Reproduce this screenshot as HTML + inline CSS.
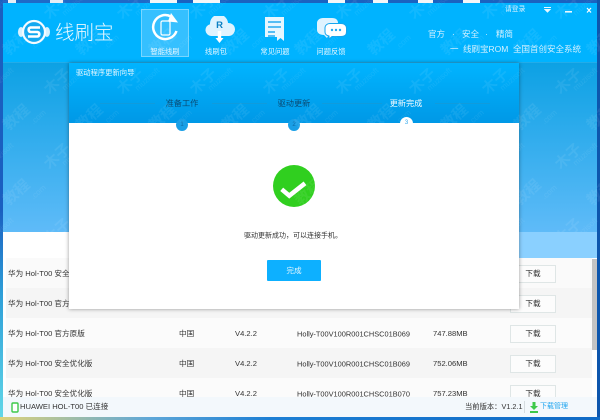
<!DOCTYPE html>
<html><head><meta charset="utf-8"><style>
*{margin:0;padding:0;box-sizing:border-box}
html,body{width:600px;height:420px;overflow:hidden;background:#1565c0}
body{font-family:"Liberation Sans","Noto Sans CJK SC",sans-serif;color:#333}
#w{position:absolute;left:0;top:0;width:600px;height:420px;filter:blur(.3px)}
.a{position:absolute;white-space:nowrap;line-height:1}
.t{font-size:7.6px;color:#333;transform:translateY(-50%)}
.h{font-size:7.4px}
.c{transform:translate(-50%,-50%)}
.btn{position:absolute;left:510px;width:46px;height:18px;border:1px solid #dfe6e6;background:#fcfcfc;font-size:7.6px;line-height:16px;text-align:center;color:#333}
.nav{position:absolute;font-size:7.3px;color:#e4f6ff;line-height:1;transform:translateX(-50%);white-space:nowrap}
.g{font-size:8.5px;color:#d2f0ff}
</style></head><body><div id="w">
<div class="a" style="left:0;top:0;width:600px;height:3px;background:linear-gradient(90deg,#1e63c4 8px,#e8eef6 8px,#e8eef6 16px,#1e6ac8 16px,#1e6ac8 50px,#e8eef6 50px,#e8eef6 63px,#1e6ac8 63px,#1e6ac8 150px,#f4f6f8 150px,#f4f6f8 177px,#1a62c0 177px,#1a62c0 193px,#f4f6f8 193px,#f4f6f8 220px,#1a62c0 220px,#1a62c0 328px,#f4f6f8 328px,#f4f6f8 345px,#1a62c0 345px,#1a62c0 373px,#f4f6f8 373px,#f4f6f8 388px,#1a62c0 388px,#1a62c0 418px,#f4f6f8 418px,#f4f6f8 433px,#1a62c0 433px,#1a62c0 463px,#f4f6f8 463px,#f4f6f8 480px,#1a62c0 480px)"></div>
<div class="a" style="left:0;top:0;width:3px;height:420px;background:linear-gradient(180deg,#1a5fc0 0,#1a5fc0 50%,#2f9fd8 70%,#63d8e8 100%)"></div>
<div class="a" style="left:597px;top:0;width:3px;height:420px;background:#0d56ad"></div>
<div class="a" style="left:0;top:417px;width:600px;height:3px;background:linear-gradient(90deg,#ddd27a 0,#5da7d8 25%,#1c7fd4 45%,#0f6ac6 100%)"></div>

<div class="a" style="left:3px;top:3px;width:594px;height:59px;background:#00b3ff"></div>
<div class="a" style="left:3px;top:62px;width:594px;height:170px;background:linear-gradient(180deg,#0ca1e4,#5fbbf8)"></div>
<div class="a" style="left:3px;top:62px;width:594px;height:1px;background:#23ace8"></div>
<div class="a" style="left:3px;top:232px;width:66px;height:26px;background:#fff"></div>
<div class="a" style="left:519px;top:232px;width:78px;height:26px;background:#8ad0ff"></div>
<div class="a" style="left:3px;top:258px;width:594px;height:159px;background:#fff"></div>

<svg class="a" style="left:16px;top:18px" width="36" height="28" viewBox="0 0 36 28">
<ellipse cx="5" cy="14" rx="3" ry="5" fill="#d6f1ff"/><ellipse cx="31" cy="14" rx="3" ry="5" fill="#d6f1ff"/>
<circle cx="18" cy="14" r="11" fill="#13a8f0" stroke="#f4fbff" stroke-width="2.2"/>
<path d="M24 9.500H14.500a2.300 2.300 0 0 0 0 4.500h7a2.300 2.300 0 0 1 0 4.500H12" fill="none" stroke="#fff" stroke-width="2.600"/>
</svg>
<div class="a" style="left:55px;top:24px;font-size:19.5px;color:#eaf8ff;font-weight:300">线刷宝</div>

<div class="a" style="left:141px;top:9px;width:48px;height:48px;background:#35c0ff;border:1px solid #78d6ff"></div>
<svg class="a" style="left:150px;top:13px" width="30" height="28" viewBox="0 0 30 28">
<path d="M26.500 18A12 12 0 1 1 21 3.600" fill="none" stroke="#fff" stroke-width="2.500"/>
<path d="M21 0l7 9.500-10 -1z" fill="#fff"/>
<rect x="11" y="8" width="9" height="14" rx="1.500" fill="none" stroke="#fff" stroke-width="1.200"/>
</svg>
<div class="nav" style="left:165px;top:48px">智能线刷</div>
<svg class="a" style="left:204px;top:16px" width="32" height="28" viewBox="0 0 32 28">
<path d="M7 20a6 6 0 0 1-1-11.800A9 9 0 0 1 24 7 6.500 6.500 0 0 1 25 20z" fill="#dff3ff"/>
<rect x="13.800" y="15" width="3.400" height="8" fill="#fff"/><path d="M11.500 22h8L15.500 27z" fill="#fff"/>
<text x="15.500" y="12" font-size="9.500" font-weight="bold" text-anchor="middle" fill="#0d7fc2" font-family="Liberation Sans">R</text>
</svg>
<div class="nav" style="left:216px;top:48px">线刷包</div>
<svg class="a" style="left:264px;top:16px" width="22" height="27" viewBox="0 0 22 27">
<path d="M1 1h19v24l-3.500-3-3.500 3V21H1z" fill="#e6f6ff"/>
<path d="M4 6h13M4 11h13M4 16h7M4 20h7" stroke="#25aaf0" stroke-width="1.600"/>
</svg>
<div class="nav" style="left:275px;top:48px">常见问题</div>
<svg class="a" style="left:316px;top:17px" width="32" height="27" viewBox="0 0 32 27">
<path d="M7 1h9c4 0 6 2 6 5v8c0 3-2 5-6 5H12l-1 2-3-3c-4 0-7-2-7-5V6c0-3 3-5 6-5z" fill="#dff3ff"/>
<path d="M14 6.500h11c3.500 0 5.500 2 5.500 4.500v4c0 3-2 4.500-5.500 4.500h-9l-3 2.500 0-3c-2.500-.5-4-2-4-4v-4c0-2.500 2-4.500 5-4.500z" fill="#fff" stroke="#16a6ee" stroke-width="1"/>
<circle cx="16" cy="13" r="1.200" fill="#25aaf0"/><circle cx="20" cy="13" r="1.200" fill="#25aaf0"/><circle cx="24" cy="13" r="1.200" fill="#25aaf0"/>
</svg>
<div class="nav" style="left:331px;top:48px">问题反馈</div>

<div class="a" style="left:505px;top:7px;font-size:6.8px;color:#d8f1ff">请登录</div>
<svg class="a" style="left:544px;top:6px" width="50" height="10" viewBox="0 0 50 10">
<path d="M0 1.500h7M1 3.500h5l-2.500 2.500z" stroke="#eaf8ff" fill="#eaf8ff" stroke-width="1"/>
<rect x="21" y="5" width="7" height="1.600" fill="#eaf8ff"/>
<path d="M43 2l4 4.500M47 2l-4 4.500" stroke="#fff" stroke-width="1.200"/>
</svg>
<div class="a g" style="left:428px;top:30px">官方</div>
<div class="a g" style="left:452px;top:30px">·</div>
<div class="a g" style="left:462px;top:30px">安全</div>
<div class="a g" style="left:485px;top:30px">·</div>
<div class="a g" style="left:496px;top:30px">精简</div>
<div class="a g" style="left:450px;top:45px">一</div>
<div class="a g" style="left:463px;top:45px">线刷宝ROM</div>
<div class="a g" style="left:513px;top:45px">全国首创安全系统</div>

<div class="a" style="left:6px;top:258px;width:586px;height:30px;background:#fafafa"></div>
<div class="a" style="left:6px;top:288px;width:586px;height:30px;background:#f5f5f5"></div>
<div class="a" style="left:6px;top:318px;width:586px;height:30px;background:#fbfbfb"></div>
<div class="a" style="left:6px;top:348px;width:586px;height:30px;background:#f5f5f5"></div>
<div class="a" style="left:6px;top:378px;width:586px;height:30px;background:#fbfbfb"></div>
<div class="a" style="left:592px;top:259px;width:5px;height:91px;background:#c4c4c4"></div>

<div class="a t" style="left:8px;top:274px">华为 Hol-T00 安全优化版</div>
<div class="a t" style="left:8px;top:304px">华为 Hol-T00 官方原版</div>
<div class="a t" style="left:8px;top:334px">华为 Hol-T00 官方原版</div>
<div class="a t" style="left:8px;top:364px">华为 Hol-T00 安全优化版</div>
<div class="a t" style="left:8px;top:394px">华为 Hol-T00 安全优化版</div>

<div class="a t" style="left:179px;top:334px">中国</div><div class="a t" style="left:235px;top:334px">V4.2.2</div><div class="a t h" style="left:297px;top:334px">Holly-T00V100R001CHSC01B069</div><div class="a t" style="left:433px;top:334px">747.88MB</div>
<div class="a t" style="left:179px;top:364px">中国</div><div class="a t" style="left:235px;top:364px">V4.2.2</div><div class="a t h" style="left:297px;top:364px">Holly-T00V100R001CHSC01B069</div><div class="a t" style="left:433px;top:364px">752.06MB</div>
<div class="a t" style="left:179px;top:394px">中国</div><div class="a t" style="left:235px;top:394px">V4.2.2</div><div class="a t h" style="left:297px;top:394px">Holly-T00V100R001CHSC01B070</div><div class="a t" style="left:433px;top:394px">757.23MB</div>

<div class="btn" style="top:265px">下载</div>
<div class="btn" style="top:295px">下载</div>
<div class="btn" style="top:325px">下载</div>
<div class="btn" style="top:355px">下载</div>
<div class="btn" style="top:385px">下载</div>

<div class="a" style="left:3px;top:397px;width:594px;height:20px;background:#f3f8fc"></div>
<svg class="a" style="left:11px;top:402px" width="8" height="11"><rect x="1" y="1" width="6" height="9" rx="1" fill="#fff" stroke="#3ec94a" stroke-width="1.400"/></svg>
<div class="a" style="left:20px;top:403px;font-size:7.6px;color:#333">HUAWEI HOL-T00 已连接</div>
<div class="a" style="left:465px;top:403px;font-size:7.3px;color:#333">当前版本：V1.2.1</div>
<div class="a" style="left:524px;top:401px;width:1px;height:12px;background:#d5dce0"></div>
<svg class="a" style="left:530px;top:402px" width="8" height="11"><path d="M2.500 0h3v4H8L4 8 0 4h2.500z M0 9h8v2H0z" fill="#3ec94a"/></svg>
<div class="a" style="left:540px;top:403px;font-size:7px;color:#1fa5ef">下载管理</div>

<div class="a" style="left:69px;top:63px;width:450px;height:246px;background:#fff;box-shadow:0 0 4px rgba(0,0,0,.4)"></div>
<div class="a" style="left:69px;top:63px;width:450px;height:60px;background:linear-gradient(180deg,#00b4ff,#0098e6)"></div>
<div class="a" style="left:76px;top:69px;font-size:7.3px;color:#e2f6ff">驱动程序更新向导</div>
<div class="a" style="left:100px;top:103px;width:55px;height:1px;background:#109bdc"></div>
<div class="a" style="left:212px;top:103px;width:55px;height:1px;background:#109bdc"></div>
<div class="a" style="left:322px;top:103px;width:60px;height:1px;background:#109bdc"></div>
<div class="a" style="left:435px;top:103px;width:55px;height:1px;background:#109bdc"></div>
<div class="a c" style="left:182px;top:104px;font-size:8.2px;color:#0b4a72">准备工作</div>
<div class="a c" style="left:294px;top:104px;font-size:8.2px;color:#0b4a72">驱动更新</div>
<div class="a c" style="left:406px;top:104px;font-size:8.2px;color:#f2fbff">更新完成</div>
<div class="a" style="left:176px;top:119px;width:12px;height:12px;border-radius:50%;background:#1a9fe6;font-size:6px;line-height:12px;text-align:center;color:#0f6aa5">1</div>
<div class="a" style="left:288px;top:119px;width:12px;height:12px;border-radius:50%;background:#1a9fe6;font-size:6px;line-height:12px;text-align:center;color:#0f6aa5">2</div>
<div class="a" style="left:400px;top:117px;width:13px;height:13px;border-radius:50%;background:#fff;font-size:6px;line-height:13px;text-align:center;color:#35a9ec">3</div>

<svg class="a" style="left:273px;top:165px" width="42" height="42" viewBox="0 0 42 42">
<circle cx="21" cy="21" r="21" fill="#30cf1f"/>
<path d="M8.700 24.300L16.300 30.700 32 18.300" fill="none" stroke="#fff" stroke-width="4.500"/>
</svg>
<div class="a c" style="left:293px;top:236px;font-size:7px;color:#333">驱动更新成功，可以连接手机。</div>
<div class="a" style="left:267px;top:260px;width:54px;height:21px;background:#0db0ff;border-radius:1px;font-size:7.6px;line-height:21px;text-align:center;color:#e6f7ff">完成</div>

<svg class="a" style="left:0;top:0;pointer-events:none" width="600" height="420">
<defs>
<pattern id="wm" x="-15" y="0" width="73" height="75" patternUnits="userSpaceOnUse">
<g fill="#fff" font-family="Liberation Sans,Noto Sans CJK SC,sans-serif">
<text transform="translate(73 7) rotate(-42)" font-size="15" font-weight="bold" text-anchor="middle" dominant-baseline="middle">木子</text>
<text transform="translate(73 82) rotate(-42)" font-size="15" font-weight="bold" text-anchor="middle" dominant-baseline="middle">木子</text>
<text transform="translate(0 7) rotate(-42)" font-size="15" font-weight="bold" text-anchor="middle" dominant-baseline="middle">木子</text>
<text transform="translate(0 82) rotate(-42)" font-size="15" font-weight="bold" text-anchor="middle" dominant-baseline="middle">木子</text>
<text transform="translate(32 43) rotate(-42)" font-size="15" font-weight="bold" text-anchor="middle" dominant-baseline="middle">教程</text>
<text transform="translate(18 6) rotate(-42)" font-size="8" text-anchor="middle">muzisoft</text>
<text transform="translate(18 81) rotate(-42)" font-size="8" text-anchor="middle">muzisoft</text>
<text transform="translate(55 44) rotate(-42)" font-size="8" text-anchor="middle">.com</text>
</g>
</pattern>
</defs>
<rect x="0" y="0" width="600" height="232" fill="url(#wm)" opacity=".07"/>
</svg>
</div></body></html>
